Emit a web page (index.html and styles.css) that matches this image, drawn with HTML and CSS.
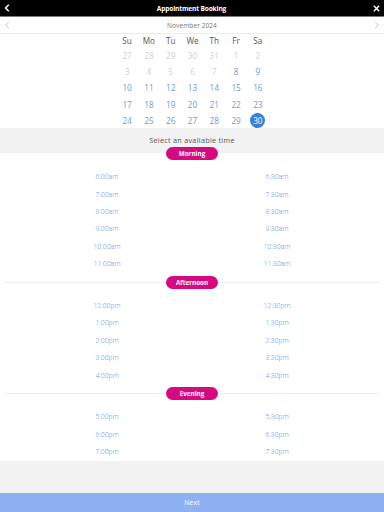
FILE: index.html
```html
<!DOCTYPE html>
<html>
<head>
<meta charset="utf-8">
<link rel="stylesheet" href="styles.css">
</head>
<body>
<div class="app">
  <header class="topbar">
    <span class="top-icon back">
      <svg width="6" height="8" viewBox="0 0 6 8"><path d="M4.8 0.8 L1.6 4 L4.8 7.2" fill="none" stroke="#fff" stroke-width="1.5"/></svg>
    </span>
    <span class="title">Appointment Booking</span>
    <span class="top-icon close">
      <svg width="7" height="7" viewBox="0 0 7 7"><path d="M0.8 0.8 L6.2 6.2 M6.2 0.8 L0.8 6.2" fill="none" stroke="#fff" stroke-width="1.4"/></svg>
    </span>
  </header>
  <div class="month-nav">
    <span class="nav-icon">
      <svg width="5" height="8" viewBox="0 0 5 8"><path d="M4 0.8 L1 4 L4 7.2" fill="none" stroke="#c4c4c4" stroke-width="0.9"/></svg>
    </span>
    <span class="month">November 2024</span>
    <span class="nav-icon">
      <svg width="5" height="8" viewBox="0 0 5 8"><path d="M1 0.8 L4 4 L1 7.2" fill="none" stroke="#c4c4c4" stroke-width="0.9"/></svg>
    </span>
  </div>
  <div class="calendar">
    <span class="wd">Su</span><span class="wd">Mo</span><span class="wd">Tu</span><span class="wd">We</span><span class="wd">Th</span><span class="wd">Fr</span><span class="wd">Sa</span>
    <span class="d off">27</span><span class="d off">28</span><span class="d off">29</span><span class="d off">30</span><span class="d off">31</span><span class="d off">1</span><span class="d off">2</span>
    <span class="d off">3</span><span class="d off">4</span><span class="d off">5</span><span class="d off">6</span><span class="d off">7</span><span class="d">8</span><span class="d">9</span>
    <span class="d">10</span><span class="d">11</span><span class="d">12</span><span class="d">13</span><span class="d">14</span><span class="d">15</span><span class="d">16</span>
    <span class="d">17</span><span class="d">18</span><span class="d">19</span><span class="d">20</span><span class="d">21</span><span class="d">22</span><span class="d">23</span>
    <span class="d">24</span><span class="d">25</span><span class="d">26</span><span class="d">27</span><span class="d">28</span><span class="d">29</span><span class="d"><span class="sel">30</span></span>
  </div>
  <div class="select-bar">Select an available time</div>
  <main class="slots">
    <div class="section-head first"><span class="pill">Morning</span></div>
    <div class="times">
      <span>6:00am</span><span>6:30am</span>
      <span>7:00am</span><span>7:30am</span>
      <span>8:00am</span><span>8:30am</span>
      <span>9:00am</span><span>9:30am</span>
      <span>10:00am</span><span>10:30am</span>
      <span>11:00am</span><span>11:30am</span>
    </div>
    <div class="section-head"><span class="pill">Afternoon</span></div>
    <div class="times">
      <span>12:00pm</span><span>12:30pm</span>
      <span>1:00pm</span><span>1:30pm</span>
      <span>2:00pm</span><span>2:30pm</span>
      <span>3:00pm</span><span>3:30pm</span>
      <span>4:00pm</span><span>4:30pm</span>
    </div>
    <div class="section-head"><span class="pill">Evening</span></div>
    <div class="times">
      <span>5:00pm</span><span>5:30pm</span>
      <span>6:00pm</span><span>6:30pm</span>
      <span>7:00pm</span><span>7:30pm</span>
    </div>
  </main>
  <div class="filler"></div>
  <button class="next">Next</button>
</div>
</body>
</html>
```
FILE: styles.css
```css
* { box-sizing: border-box; }
html, body { margin: 0; padding: 0; }
body {
  width: 384px;
  height: 512px;
  overflow: hidden;
  font-family: "Open Sans", "Noto Sans", sans-serif;
  background: #fff;
}
.app {
  height: 512px;
  display: flex;
  flex-direction: column;
}
.topbar {
  height: 17px;
  flex: none;
  background: #000;
  border-bottom: 1px solid #7a7a7a;
  display: flex;
  align-items: center;
  justify-content: space-between;
  padding: 0 4px 0 3px;
}
.top-icon { display: flex; width: 8px; justify-content: center; }
.title {
  color: #fff;
  font-weight: 700;
  font-size: 6.6px;
  letter-spacing: -0.15px;
}
.month-nav {
  height: 17px;
  flex: none;
  border-bottom: 1px solid #ececec;
  display: flex;
  align-items: center;
  justify-content: space-between;
  padding: 0 5px;
}
.nav-icon { display: flex; }
.month {
  font-size: 6.6px;
  color: #777;
  letter-spacing: 0.05px;
}
.calendar {
  flex: none;
  align-self: center;
  display: grid;
  grid-template-columns: repeat(7, 21.8px);
  grid-template-rows: 13px repeat(5, 16.3px);
  font-size: 8.2px;
  text-align: center;
  margin-left: 1px;
}
.calendar span { display: flex; align-items: center; justify-content: center; }
.wd { color: #555; }
.d { color: #7097de; }
.d.off { color: #cfcfcf; }
.sel {
  width: 15px;
  height: 15px;
  border-radius: 50%;
  background: #3a7fdf;
  color: #fff;
}
.select-bar {
  flex: none;
  height: 25px;
  background: #f2f2f2;
  color: #555;
  font-size: 7.2px;
  letter-spacing: 0.3px;
  text-align: center;
  padding-top: 7px;
}
.slots { flex: none; background: #fff; }
.section-head {
  position: relative;
  height: 13px;
  display: flex;
  justify-content: center;
  margin-top: 3px;
}
.section-head::before {
  content: "";
  position: absolute;
  left: 4px;
  right: 4px;
  top: 6px;
  height: 1px;
  background: #eeeeee;
}
.section-head.first { margin-top: -6.5px; }
.section-head.first::before { display: none; }
.pill {
  position: relative;
  width: 52px;
  height: 13px;
  border-radius: 7px;
  background: #d8087f;
  color: #fff;
  font-size: 6.3px;
  font-weight: 700;
  display: flex;
  align-items: center;
  justify-content: center;
}
.times {
  display: grid;
  grid-template-columns: 170px 170px;
  grid-auto-rows: 17.4px;
  justify-content: center;
  padding: 8.5px 0 0;
  font-family: Roboto, "Liberation Sans", sans-serif;
  font-weight: 300;
  font-size: 7px;
  color: #7b9be4;
}
.times span { display: flex; align-items: center; justify-content: center; }
.filler { flex: 1; background: #f2f2f2; }
.next {
  flex: none;
  height: 19px;
  border: 0;
  margin: 0;
  background: #8fb1f2;
  color: #fff;
  font-family: "Open Sans", sans-serif;
  font-size: 7px;
  padding: 0;
}
```
